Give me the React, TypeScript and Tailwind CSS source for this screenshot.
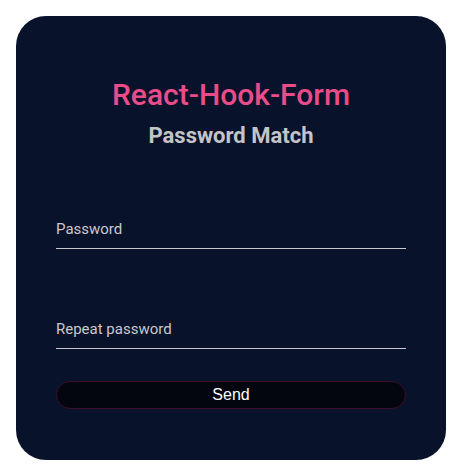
import { useState } from "react";

function Field({ label, value, onChange }: { label: string; value: string; onChange: (v: string) => void }) {
  return (
    <div className="border-b border-[#c9c9cf] pb-[9px]">
      <input
        type="password"
        placeholder={label}
        value={value}
        onChange={(e) => onChange(e.target.value)}
        className="block h-5 w-full bg-transparent text-[15px] leading-5 text-[#c9c9cf] placeholder:text-[#c9c9cf] outline-none"
      />
    </div>
  );
}

export default function App() {
  const [password, setPassword] = useState("");
  const [repeat, setRepeat] = useState("");

  return (
    <div className="min-h-screen bg-white p-4 font-['Roboto',sans-serif]">
      <form
        onSubmit={(e) => e.preventDefault()}
        className="w-[430px] rounded-[30px] bg-[#08122b] px-10 pt-[61px] pb-[51px]"
      >
        <h1 className="text-center text-[30px] font-medium leading-9 text-[#ea4c89]">React-Hook-Form</h1>
        <h2 className="mt-[10px] text-center text-[22px] font-bold leading-[26px] text-[#c4c4c8]">Password Match</h2>

        <div className="mt-[70px]">
          <Field label="Password" value={password} onChange={setPassword} />
        </div>
        <div className="mt-[70px]">
          <Field label="Repeat password" value={repeat} onChange={setRepeat} />
        </div>

        <button
          type="submit"
          className="mt-8 block h-[28px] w-full rounded-full border border-[#3a0f2c] bg-[#03050f] font-['Liberation_Sans',Arial,sans-serif] text-base text-white"
        >
          Send
        </button>
      </form>
    </div>
  );
}
